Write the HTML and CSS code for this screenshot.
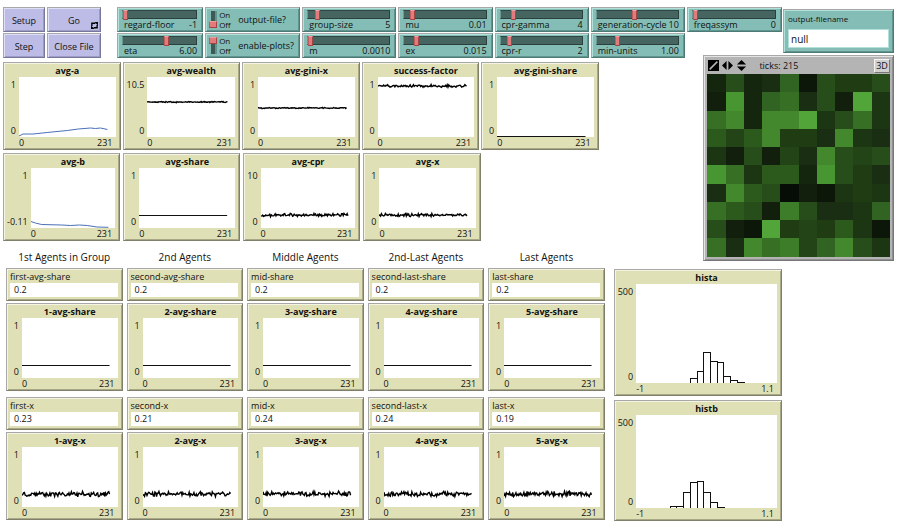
FILE: index.html
```html
<!DOCTYPE html>
<html lang="en">
<head>
    <meta charset="UTF-8">
    <meta name="viewport" content="width=device-width, initial-scale=1.0">
    <title>Model Interface</title>
    <link rel="stylesheet" href="styles.css">
</head>
<body>

<header class="toolbar">
    <div class="buttons">
        <button class="button">Setup</button>
        <button class="button">Go
            <svg class="forever" viewBox="0 0 8 8"><path d="M1 4.5V1.5H5M7 3.5V6.5H3" fill="none" stroke="#000" stroke-width="1.6"/><path d="M4 0H8V4zM4 8H0V4z"/></svg>
        </button>
        <button class="button">Step</button>
        <button class="button">Close File</button>
    </div>

    <div class="controls">
        <div class="slider">
            <input type="range" id="regard-floor" min="0" max="100" value="0">
            <label for="regard-floor">regard-floor</label><output>-1</output>
        </div>
        <div class="switch">
            <input type="checkbox" id="output-file">
            <span class="states"><span>On</span><span>Off</span></span>
            <label for="output-file">output-file?</label>
        </div>
        <div class="slider">
            <input type="range" id="group-size" min="0" max="100" value="9">
            <label for="group-size">group-size</label><output>5</output>
        </div>
        <div class="slider">
            <input type="range" id="mu" min="0" max="100" value="7">
            <label for="mu">mu</label><output>0.01</output>
        </div>
        <div class="slider">
            <input type="range" id="cpr-gamma" min="0" max="100" value="14">
            <label for="cpr-gamma">cpr-gamma</label><output>4</output>
        </div>
        <div class="slider">
            <input type="range" id="generation-cycle" min="0" max="100" value="46">
            <label for="generation-cycle">generation-cycle</label><output>10</output>
        </div>
        <div class="slider">
            <input type="range" id="freqassym" min="0" max="100" value="0">
            <label for="freqassym">freqassym</label><output>0</output>
        </div>

        <div class="slider">
            <input type="range" id="eta" min="0" max="100" value="60">
            <label for="eta">eta</label><output>6.00</output>
        </div>
        <div class="switch">
            <input type="checkbox" id="enable-plots" checked>
            <span class="states"><span>On</span><span>Off</span></span>
            <label for="enable-plots">enable-plots?</label>
        </div>
        <div class="slider">
            <input type="range" id="m" min="0" max="100" value="0">
            <label for="m">m</label><output>0.0010</output>
        </div>
        <div class="slider">
            <input type="range" id="ex" min="0" max="100" value="13">
            <label for="ex">ex</label><output>0.015</output>
        </div>
        <div class="slider">
            <input type="range" id="cpr-r" min="0" max="100" value="9">
            <label for="cpr-r">cpr-r</label><output>2</output>
        </div>
        <div class="slider">
            <input type="range" id="min-units" min="0" max="100" value="24">
            <label for="min-units">min-units</label><output>1.00</output>
        </div>
    </div>

    <div class="filename">
        <label for="output-filename">output-filename</label>
        <input type="text" id="output-filename" value="null">
    </div>
</header>

<main class="content">
    <div class="left">
        <section class="row first-row">
            <div class="plot">
                <h3>avg-a</h3>
                <div class="y-axis"><span>1</span><span>0</span></div>
                <svg class="chart" data-line="0,59 4,57 14,57 28,55.5 48,53.5 59,52 71,51 76,51.5 81,51 88,52.5"></svg>
                <div class="x-axis"><span>0</span><span>231</span></div>
            </div>
            <div class="plot">
                <h3>avg-wealth</h3>
                <div class="y-axis"><span>10.5</span><span>0</span></div>
                <svg class="chart" data-level="25" data-noise="0.7"></svg>
                <div class="x-axis"><span>0</span><span>231</span></div>
            </div>
            <div class="plot">
                <h3>avg-gini-x</h3>
                <div class="y-axis"><span>1</span><span>0</span></div>
                <svg class="chart" data-level="31" data-noise="0.7"></svg>
                <div class="x-axis"><span>0</span><span>231</span></div>
            </div>
            <div class="plot">
                <h3>success-factor</h3>
                <div class="y-axis"><span>1</span><span>0</span></div>
                <svg class="chart" data-level="9" data-noise="1.5"></svg>
                <div class="x-axis"><span>0</span><span>231</span></div>
            </div>
            <div class="plot">
                <h3>avg-gini-share</h3>
                <div class="y-axis"><span>1</span><span>0</span></div>
                <svg class="chart" data-level="59.5" data-noise="0"></svg>
                <div class="x-axis"><span>0</span><span>231</span></div>
            </div>
        </section>

        <section class="row second-row">
            <div class="plot">
                <h3>avg-b</h3>
                <div class="y-axis"><span>1</span><span>-0.11</span></div>
                <svg class="chart" data-line="0,53.5 5,55 12,56.5 35,57 45,57.5 55,57 64,57.5 75,59 88,59.3"></svg>
                <div class="x-axis"><span>0</span><span>231</span></div>
            </div>
            <div class="plot">
                <h3>avg-share</h3>
                <div class="y-axis"><span>1</span><span>0</span></div>
                <svg class="chart" data-level="47.5" data-noise="0"></svg>
                <div class="x-axis"><span>0</span><span>231</span></div>
            </div>
            <div class="plot">
                <h3>avg-cpr</h3>
                <div class="y-axis"><span>10</span><span>0</span></div>
                <svg class="chart" data-level="47" data-noise="1.8"></svg>
                <div class="x-axis"><span>0</span><span>231</span></div>
            </div>
            <div class="plot">
                <h3>avg-x</h3>
                <div class="y-axis"><span>1</span><span>0</span></div>
                <svg class="chart" data-level="47" data-noise="1.8"></svg>
                <div class="x-axis"><span>0</span><span>231</span></div>
            </div>
        </section>

        <section class="agents">
            <h2>1st Agents in Group</h2>
            <h2>2nd Agents</h2>
            <h2>Middle Agents</h2>
            <h2>2nd-Last Agents</h2>
            <h2>Last Agents</h2>

            <div class="group">
                <div class="monitor"><span>first-avg-share</span><output>0.2</output></div>
                <div class="plot">
                    <h3>1-avg-share</h3>
                    <div class="y-axis"><span>1</span><span>0</span></div>
                    <svg class="chart" data-level="47.5" data-noise="0"></svg>
                    <div class="x-axis"><span>0</span><span>231</span></div>
                </div>
            </div>
            <div class="group">
                <div class="monitor"><span>second-avg-share</span><output>0.2</output></div>
                <div class="plot">
                    <h3>2-avg-share</h3>
                    <div class="y-axis"><span>1</span><span>0</span></div>
                    <svg class="chart" data-level="47.5" data-noise="0"></svg>
                    <div class="x-axis"><span>0</span><span>231</span></div>
                </div>
            </div>
            <div class="group">
                <div class="monitor"><span>mid-share</span><output>0.2</output></div>
                <div class="plot">
                    <h3>3-avg-share</h3>
                    <div class="y-axis"><span>1</span><span>0</span></div>
                    <svg class="chart" data-level="47.5" data-noise="0"></svg>
                    <div class="x-axis"><span>0</span><span>231</span></div>
                </div>
            </div>
            <div class="group">
                <div class="monitor"><span>second-last-share</span><output>0.2</output></div>
                <div class="plot">
                    <h3>4-avg-share</h3>
                    <div class="y-axis"><span>1</span><span>0</span></div>
                    <svg class="chart" data-level="47.5" data-noise="0"></svg>
                    <div class="x-axis"><span>0</span><span>231</span></div>
                </div>
            </div>
            <div class="group">
                <div class="monitor"><span>last-share</span><output>0.2</output></div>
                <div class="plot">
                    <h3>5-avg-share</h3>
                    <div class="y-axis"><span>1</span><span>0</span></div>
                    <svg class="chart" data-level="47.5" data-noise="0"></svg>
                    <div class="x-axis"><span>0</span><span>231</span></div>
                </div>
            </div>

            <div class="group">
                <div class="monitor"><span>first-x</span><output>0.23</output></div>
                <div class="plot">
                    <h3>1-avg-x</h3>
                    <div class="y-axis"><span>1</span><span>0</span></div>
                    <svg class="chart" data-level="47" data-noise="3"></svg>
                    <div class="x-axis"><span>0</span><span>231</span></div>
                </div>
            </div>
            <div class="group">
                <div class="monitor"><span>second-x</span><output>0.21</output></div>
                <div class="plot">
                    <h3>2-avg-x</h3>
                    <div class="y-axis"><span>1</span><span>0</span></div>
                    <svg class="chart" data-level="47" data-noise="3"></svg>
                    <div class="x-axis"><span>0</span><span>231</span></div>
                </div>
            </div>
            <div class="group">
                <div class="monitor"><span>mid-x</span><output>0.24</output></div>
                <div class="plot">
                    <h3>3-avg-x</h3>
                    <div class="y-axis"><span>1</span><span>0</span></div>
                    <svg class="chart" data-level="47" data-noise="3"></svg>
                    <div class="x-axis"><span>0</span><span>231</span></div>
                </div>
            </div>
            <div class="group">
                <div class="monitor"><span>second-last-x</span><output>0.24</output></div>
                <div class="plot">
                    <h3>4-avg-x</h3>
                    <div class="y-axis"><span>1</span><span>0</span></div>
                    <svg class="chart" data-level="47" data-noise="3"></svg>
                    <div class="x-axis"><span>0</span><span>231</span></div>
                </div>
            </div>
            <div class="group">
                <div class="monitor"><span>last-x</span><output>0.19</output></div>
                <div class="plot">
                    <h3>5-avg-x</h3>
                    <div class="y-axis"><span>1</span><span>0</span></div>
                    <svg class="chart" data-level="47" data-noise="3"></svg>
                    <div class="x-axis"><span>0</span><span>231</span></div>
                </div>
            </div>
        </section>
    </div>

    <div class="right">
        <section class="world">
            <div class="world-bar">
                <svg class="icon" viewBox="0 0 10 10"><path d="M0 0H10V10H0z"/><path d="M1.5 8.5L8.5 1.5" stroke="#b4b4b4" stroke-width="1.4"/></svg>
                <svg class="icon" viewBox="0 0 12 10"><path d="M5 0V10L0 5zM7 0V10L12 5z"/></svg>
                <svg class="icon" viewBox="0 0 10 12"><path d="M0 5H10L5 0zM0 7H10L5 12z"/></svg>
                <span class="ticks">ticks: 215</span>
                <button class="view-3d">3D</button>
            </div>
            <div class="patches" id="patches"></div>
        </section>

        <section class="histograms">
            <div class="plot tall">
                <h3>hista</h3>
                <div class="y-axis"><span>500</span><span>0</span></div>
                <svg class="chart" data-size="140,99" data-start="54" data-bars="5,12,31,22,21,7,3,1"></svg>
                <div class="x-axis"><span>-1</span><span>1.1</span></div>
            </div>
            <div class="plot medium">
                <h3>histb</h3>
                <div class="y-axis"><span>500</span><span>0</span></div>
                <svg class="chart" data-size="140,93" data-start="34" data-bars="2,2,16,26,27,16,6,1"></svg>
                <div class="x-axis"><span>-1</span><span>1.1</span></div>
            </div>
        </section>
    </div>
</main>

<script src="script.js"></script>
</body>
</html>
```

FILE: styles.css
```css
* {
    box-sizing: border-box;
}
body {
    margin: 0;
    padding: 7px 6px 7px 3px;
    background: white;
    color: #111;
    font-family: 'Open Sans', 'Noto Sans', sans-serif;
    font-size: 9px;
    line-height: 12px;
}
h2, h3 {
    margin: 0;
}
button, input {
    margin: 0;
    font: inherit;
    color: inherit;
}

/* Top bar */
.toolbar {
    display: flex;
    align-items: flex-start;
}
.buttons {
    display: grid;
    grid-template-columns: 42px 54px;
    grid-auto-rows: 25px;
    gap: 1px 2px;
    margin-right: 16px;
}
.button {
    position: relative;
    padding: 2px 0 0;
    background: #bcbce6;
    border: 1px solid;
    border-color: #a8a8a8 #77779a #77779a #a8a8a8;
    box-shadow: inset 1px 1px 0 #dedef6, inset -1px -1px 0 #9c9cc4;
}
.forever {
    position: absolute; /* Sits in the corner of the button */
    right: 2px;
    bottom: 2px;
    width: 7px;
    height: 7px;
}
.controls {
    flex: 1;
    display: grid;
    grid-template-columns: 86fr 95fr 94fr 94fr 94fr 94fr 95fr;
    grid-auto-rows: 25px;
    gap: 1px 2px;
}
.slider, .switch, .filename {
    background: #83bdb5;
    border: 1px solid;
    border-color: #a8a8a8 #4d7a75 #4d7a75 #a8a8a8;
    box-shadow: inset 1px 1px 0 #b4e0da, inset -1px -1px 0 #5f958e;
}
.slider {
    display: grid;
    grid-template-columns: 1fr auto;
    grid-template-rows: 9px 12px;
    min-width: 0;
    padding: 2px 5px 0 4px;
    white-space: nowrap;
}
.slider label {
    padding-left: 2px;
}
.slider input {
    grid-column: 1 / 3;
    appearance: none;
    width: 100%;
    min-width: 0;
    height: 9px;
    background: #466460;
    border: 1px solid;
    border-color: #2f4744 #2a403d #2a403d #6a9a94;
}
.slider input::-webkit-slider-thumb {
    appearance: none;
    width: 5px;
    height: 10px;
    background: #e27c7c;
    border: 1px solid;
    border-color: #f0a0a0 #a04444 #a04444 #c05c5c;
}
.switch {
    display: flex;
    align-items: center;
    padding: 0 2px 0 3px;
}
.switch input {
    appearance: none;
    display: flex;
    width: 8px;
    height: 17px;
    background: linear-gradient(90deg, transparent 2px, #3d5a56 2px, #3d5a56 6px, #5f958e 6px);
}
.switch input::before {
    content: "";
    align-self: flex-end;
    width: 8px;
    height: 5px;
    background: #e27c7c;
    border: 1px solid;
    border-color: #f0a0a0 #a04444 #a04444 #c05c5c;
}
.switch input:checked::before {
    align-self: flex-start; /* Knob at the top when on */
}
.states {
    display: flex;
    flex-direction: column;
    width: 21px;
    padding-left: 2px;
    font-size: 8px;
    line-height: 10px;
}
.switch label {
    white-space: nowrap;
}
.filename {
    display: flex;
    flex-direction: column;
    width: 111px;
    margin: 2px 0 0 1px;
    padding: 3px 4px 4px;
    font-size: 8px;
}
.filename input {
    height: 19px;
    margin-top: 4px;
    padding: 0 2px;
    background: white;
    border: 1px solid #b4e0da;
    font-size: 10px;
}

/* Two columns under the bar */
.content {
    display: flex;
    gap: 9px;
    margin-top: -3px;
}
.left {
    flex: 601;
    min-width: 0;
    padding-top: 7px;
}
.right {
    flex: 280;
    display: flex;
    flex-direction: column;
    gap: 8px;
    min-width: 0;
}
.row {
    display: grid;
    grid-template-columns: repeat(5, 1fr);
}
.first-row {
    gap: 2px;
    margin-bottom: 3px;
    padding-right: 6px;
}
.second-row {
    gap: 3px;
    padding-right: 4px;
}

/* Plots and monitors */
.plot, .monitor {
    min-width: 0;
    background: #e0e0b6;
    border: 1px solid;
    border-color: #a8a8a8 #80806a #80806a #a8a8a8;
    box-shadow: inset 1px 1px 0 #f4f4e0, inset -1px -1px 0 #a8a886;
}
.plot {
    display: grid;
    grid-template-columns: auto 1fr;
    grid-template-rows: 14px 60px 12px;
    padding: 0 4px 0 3px;
}
.plot.tall {
    grid-template-rows: 14px 99px 12px;
}
.plot.medium {
    grid-template-rows: 14px 93px 12px;
}
.plot h3 {
    grid-column: 2;
    font-size: 9px;
    font-weight: 700;
    line-height: 16px;
    text-align: center;
    white-space: nowrap;
}
.y-axis {
    display: flex;
    flex-direction: column;
    justify-content: space-between;
    min-width: 12px;
    padding: 2px 3px 0 0;
    text-align: right;
}
.chart {
    width: 100%;
    height: 100%;
    background: white;
}
.chart polyline, .chart path {
    fill: none;
    stroke: #111;
    vector-effect: non-scaling-stroke;
}
.chart polyline.noisy {
    stroke: #000;
    stroke-width: 1.4;
}
.chart polyline.blue {
    stroke: #4a70b8;
}
.x-axis {
    grid-column: 2;
    display: flex;
    justify-content: space-between;
    padding: 0 3px 0 0;
}
.monitor {
    display: flex;
    flex-direction: column;
    height: 33px;
    padding: 2px 4px 3px 3px;
    white-space: nowrap;
}
.monitor output {
    flex: 1;
    padding-left: 4px;
    background: white;
    line-height: 14px;
}
.agents {
    display: grid;
    grid-template-columns: repeat(5, 1fr);
    gap: 6px 4px;
    margin-top: 9px;
    padding-left: 3px;
}
.agents h2 {
    font-size: 10px;
    font-weight: 400;
    line-height: 14px;
    text-align: center;
    margin-bottom: -2px;
}
.group {
    display: flex;
    flex-direction: column;
    gap: 2px;
    min-width: 0;
}

/* World view */
.world {
    align-self: flex-end;
    width: 68%;
    padding: 1px 3px 3px;
    background: #b4b4b4;
    border: 1px solid;
    border-color: #a8a8a8 #777 #777 #a8a8a8;
    box-shadow: inset 1px 1px 0 #e4e4e4, inset -1px -1px 0 #909090;
}
.world-bar {
    display: flex;
    align-items: center;
    gap: 3px;
    height: 17px;
    padding-left: 1px;
}
.icon {
    width: 11px;
    height: 11px;
}
.ticks {
    flex: 1;
    padding-left: 9px;
}
.view-3d {
    width: 16px;
    height: 14px;
    padding: 0;
    background: #d0d0d0;
    border: 1px solid;
    border-color: #f4f4f4 #777 #777 #f4f4f4;
    line-height: 12px;
}
.patches {
    display: grid;
    grid-template-columns: repeat(10, 1fr);
    grid-template-rows: repeat(10, 1fr);
    aspect-ratio: 1;
}
.histograms {
    display: flex;
    flex-direction: column;
    gap: 4px;
    width: 60%;
}
```

FILE: script.js
```js
const SVG_NS = "http://www.w3.org/2000/svg";

// Small seeded generator, so the runs look the same on every load
let seed = 215;
function random() {
    seed = (seed * 16807) % 2147483647;
    return seed / 2147483647;
}

function addShape(svg, name, attrs) {
    const shape = document.createElementNS(SVG_NS, name);
    for (const key in attrs) {
        shape.setAttribute(key, attrs[key]);
    }
    svg.appendChild(shape);
}

function drawLevel(svg, level, noise) {
    const points = [];
    for (let x = 0; x <= 88; x += noise ? 0.8 : 88) {
        const y = level + (random() + random() - 1) * noise;
        points.push(x.toFixed(1) + "," + y.toFixed(1));
    }
    addShape(svg, "polyline", { points: points.join(" "), class: noise ? "noisy" : "flat" });
}

function drawBars(svg, start, bars, bottom) {
    const step = 6.7;
    let d = "";
    bars.forEach((height, i) => {
        d += `M${start + i * step} ${bottom}v${-height}h${step}v${height}`;
    });
    addShape(svg, "path", { d: d, "shape-rendering": "crispEdges" });
}

document.querySelectorAll(".chart").forEach(svg => {
    const data = svg.dataset;
    const [width, height] = (data.size || "96,60").split(",").map(Number);
    svg.setAttribute("viewBox", `0 0 ${width} ${height}`);
    svg.setAttribute("preserveAspectRatio", "none");

    if (data.line) {
        addShape(svg, "polyline", { points: data.line, class: "blue" });
    } else if (data.bars) {
        drawBars(svg, Number(data.start), data.bars.split(",").map(Number), height);
    } else {
        drawLevel(svg, Number(data.level), Number(data.noise));
    }
});

// Patch shades, from darkest to lightest
const shades = {
    z: "#060c06", a: "#0c1709", b: "#111f0c", c: "#15260e", d: "#192e13",
    e: "#1c3613", f: "#1f3c13", g: "#234417", h: "#264d1a", i: "#2b5a1c",
    j: "#316322", k: "#376f25", l: "#3d7c29", m: "#43882c", n: "#489632", o: "#52a538"
};
const rows = [
    "chcdjahffh",
    "bncjkdhboe",
    "kmcmmoehke",
    "igimffdmed",
    "ebhbgdmhgh",
    "nkeiicnhfd",
    "dmihzbaefe",
    "kihblhddej",
    "hbaofgfiea",
    "kdmklgjmhe"
];
const patches = document.getElementById("patches");
rows.join("").split("").forEach(key => {
    const patch = document.createElement("div");
    patch.style.background = shades[key];
    patches.appendChild(patch);
});
```
